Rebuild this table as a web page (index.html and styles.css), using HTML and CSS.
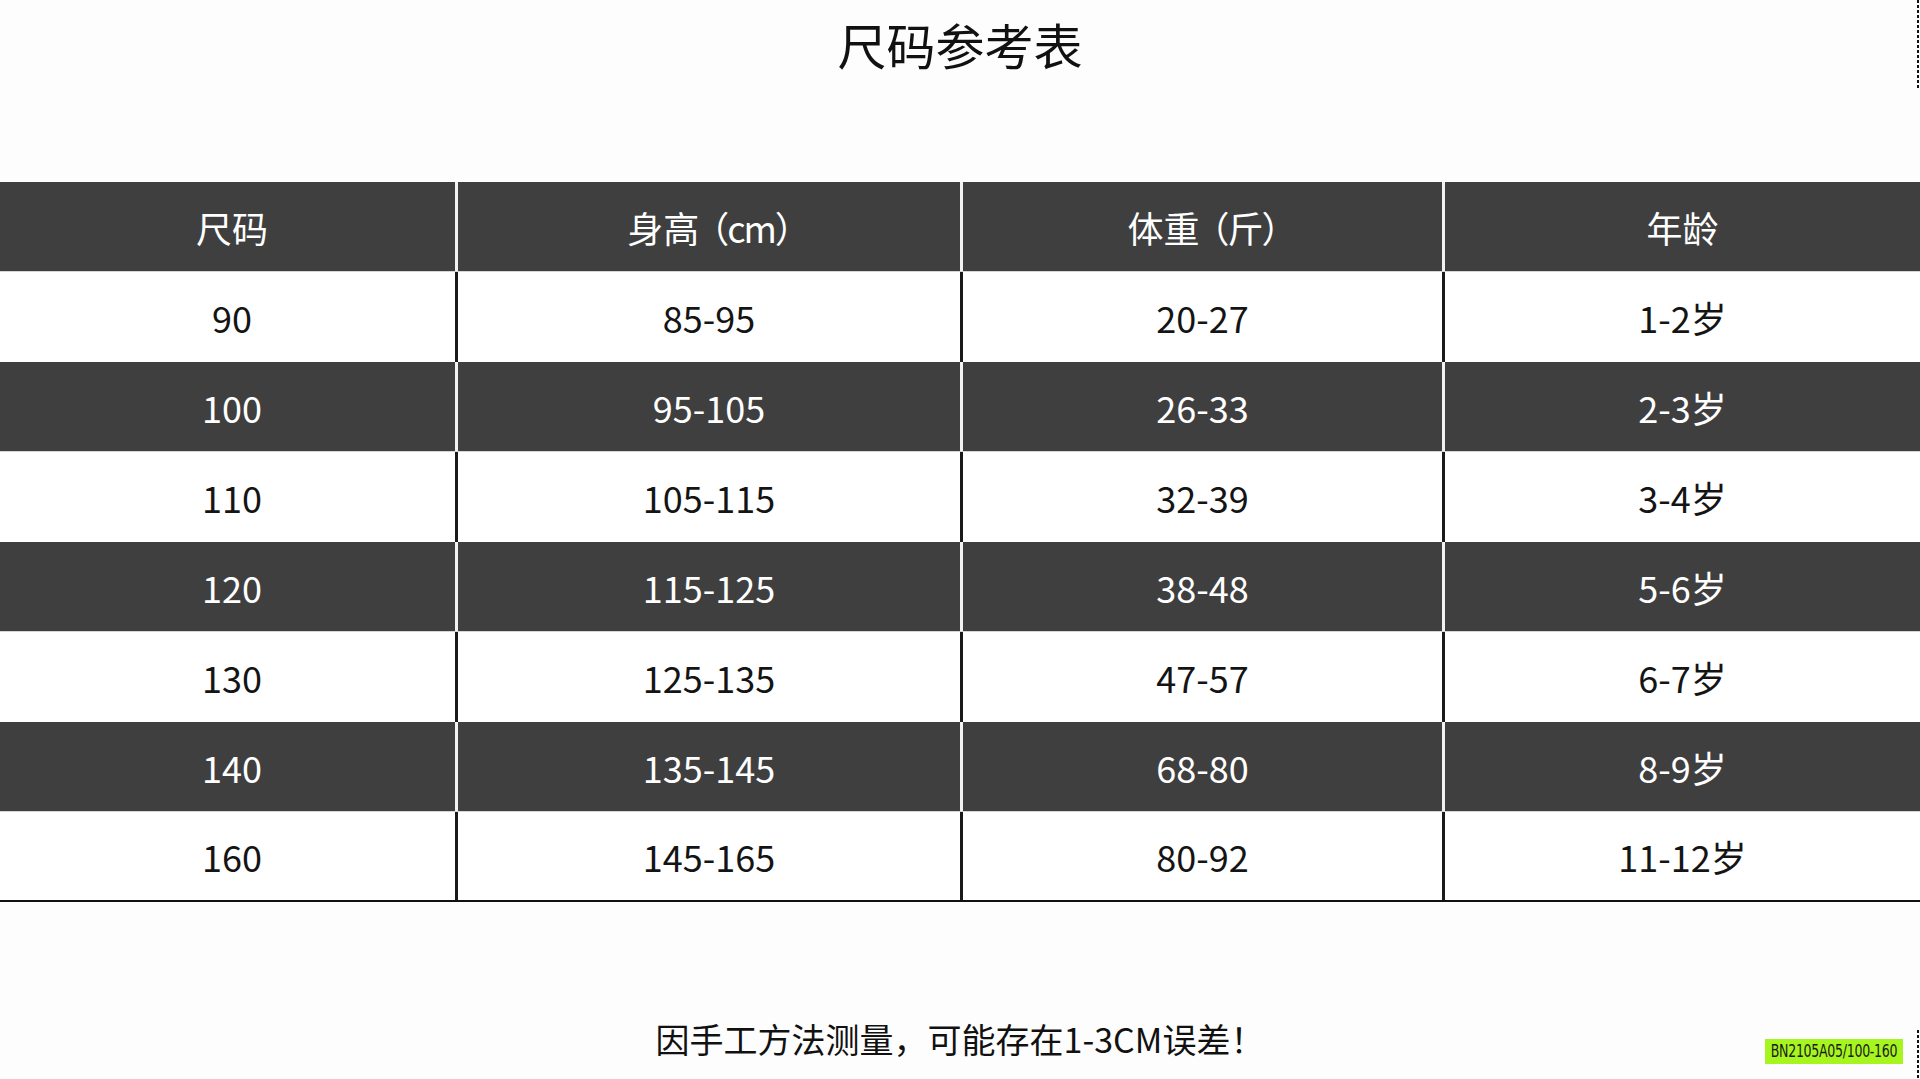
FILE: index.html
```html
<!DOCTYPE html>
<html lang="zh-CN">
<head>
<meta charset="utf-8">
<title>尺码参考表</title>
<link rel="stylesheet" href="styles.css">
</head>
<body>
<div class="page">
  <h1 class="title">尺码参考表</h1>
  <div class="table">
    <div class="row dark">
      <div class="cell">尺码</div>
      <div class="cell">身高<span class="paren">（cm）</span></div>
      <div class="cell">体重<span class="paren">（斤）</span></div>
      <div class="cell">年龄</div>
    </div>
    <div class="row light">
      <div class="cell">90</div>
      <div class="cell">85-95</div>
      <div class="cell">20-27</div>
      <div class="cell">1-2岁</div>
    </div>
    <div class="row dark">
      <div class="cell">100</div>
      <div class="cell">95-105</div>
      <div class="cell">26-33</div>
      <div class="cell">2-3岁</div>
    </div>
    <div class="row light">
      <div class="cell">110</div>
      <div class="cell">105-115</div>
      <div class="cell">32-39</div>
      <div class="cell">3-4岁</div>
    </div>
    <div class="row dark">
      <div class="cell">120</div>
      <div class="cell">115-125</div>
      <div class="cell">38-48</div>
      <div class="cell">5-6岁</div>
    </div>
    <div class="row light">
      <div class="cell">130</div>
      <div class="cell">125-135</div>
      <div class="cell">47-57</div>
      <div class="cell">6-7岁</div>
    </div>
    <div class="row dark">
      <div class="cell">140</div>
      <div class="cell">135-145</div>
      <div class="cell">68-80</div>
      <div class="cell">8-9岁</div>
    </div>
    <div class="row light last">
      <div class="cell">160</div>
      <div class="cell">145-165</div>
      <div class="cell">80-92</div>
      <div class="cell">11-12岁</div>
    </div>
  </div>
  <p class="note">因手工方法测量，可能存在1-3CM误差！</p>
  <div class="tag"><span class="tag-text">BN2105A05/100-160</span></div>
  <div class="dots dots-top"></div>
  <div class="dots dots-bottom"></div>
</div>
</body>
</html>
```
FILE: styles.css
```css
html, body {
  margin: 0;
  padding: 0;
  background: #ffffff;
}

body {
  font-family: "Noto Sans CJK SC", "Noto Sans", sans-serif;
  color: #141414;
}

.page {
  position: relative;
  width: 1920px;
  height: 1079px;
  overflow: hidden;
  background: #fdfdfd;
}

.title {
  margin: 0;
  height: 88px;
  line-height: 88px;
  text-align: center;
  font-size: 49px;
  font-weight: 400;
  color: #111111;
}

.table {
  margin-top: 94px;
  display: flex;
  flex-direction: column;
}

.row {
  display: grid;
  grid-template-columns: 455px 505px 482px 478px;
  height: 90px;
  box-sizing: border-box;
}

.cell {
  display: flex;
  align-items: center;
  justify-content: center;
  font-size: 36px;
  line-height: 1;
}

.cell:first-child {
  padding-left: 9px;
}

.cell + .cell {
  border-left: 3px solid;
}

.paren {
  margin-left: -6px;
  margin-right: -18px;
  letter-spacing: -2px;
}

.row.dark {
  background: #3f3f3f;
  color: #ffffff;
  border-bottom: 1px solid #d6d6d6;
}

.row.dark .cell + .cell {
  border-left-color: #f2f2f2;
}

.row.light {
  background: #ffffff;
  color: #141414;
}

.row.light .cell + .cell {
  border-left-color: #1a1a1a;
}

.row.last {
  border-bottom: 2px solid #111111;
}

.note {
  margin: 117px 0 0;
  text-align: center;
  font-size: 34px;
  line-height: 40px;
  color: #111111;
}

.tag {
  position: absolute;
  left: 1765px;
  top: 1039px;
  width: 138px;
  height: 25px;
  background: #a6f51e;
  color: #1b1b1b;
  font-family: "DejaVu Sans Condensed", "DejaVu Sans", sans-serif;
  font-stretch: condensed;
  font-size: 14px;
  letter-spacing: -0.3px;
  line-height: 25px;
  text-align: center;
}

.tag-text {
  display: inline-block;
  transform: scaleY(1.25);
  font-weight: 500;
}

.dots {
  position: absolute;
  right: 1px;
  width: 2px;
  background: repeating-linear-gradient(to bottom, #111 0 3px, transparent 3px 5px);
}

.dots-top {
  top: 0;
  height: 90px;
}

.dots-bottom {
  top: 1030px;
  height: 49px;
}
```
